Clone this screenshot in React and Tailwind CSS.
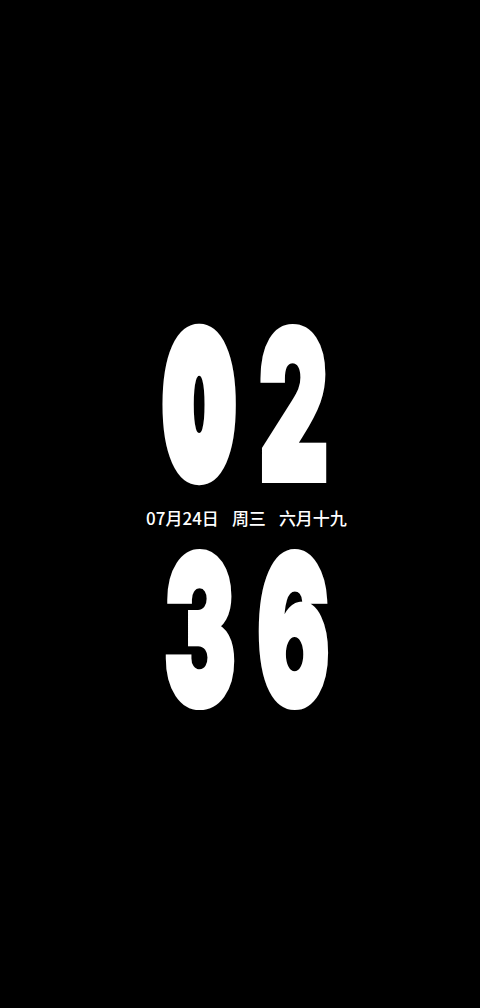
export default function App() {
  const Digit = ({ d, cls }) => (
    <div className="w-[74px] h-[164px] flex items-center justify-center overflow-visible">
      <span className={"block text-white leading-none font-black text-[200px] [font-family:Inter,'Noto_Sans',sans-serif] " + cls}>
        {d}
      </span>
    </div>
  );
  const zero = "scale-x-[0.48] scale-y-[0.93] [-webkit-text-stroke:24px_white]";
  const normal = "scale-x-[0.536] scale-y-[1.025] [-webkit-text-stroke:8px_white]";
  return (
    <div className="w-full h-[1008px] bg-black overflow-hidden">
      <div className="flex flex-col items-center pt-[322px] pl-[13px]">
        <div className="flex gap-[20px]">
          <Digit d="0" cls={zero} />
          <Digit d="2" cls={normal} />
        </div>
        <div className="mt-[19px] h-[24px] flex items-center gap-[13px] text-white text-[17px] font-medium leading-none [font-family:'Noto_Sans_CJK_SC',sans-serif]">
          <span>07月24日</span>
          <span>周三</span>
          <span>六月十九</span>
        </div>
        <div className="mt-[18px] flex gap-[20px]">
          <Digit d="3" cls={normal} />
          <Digit d="6" cls={normal} />
        </div>
      </div>
    </div>
  );
}
